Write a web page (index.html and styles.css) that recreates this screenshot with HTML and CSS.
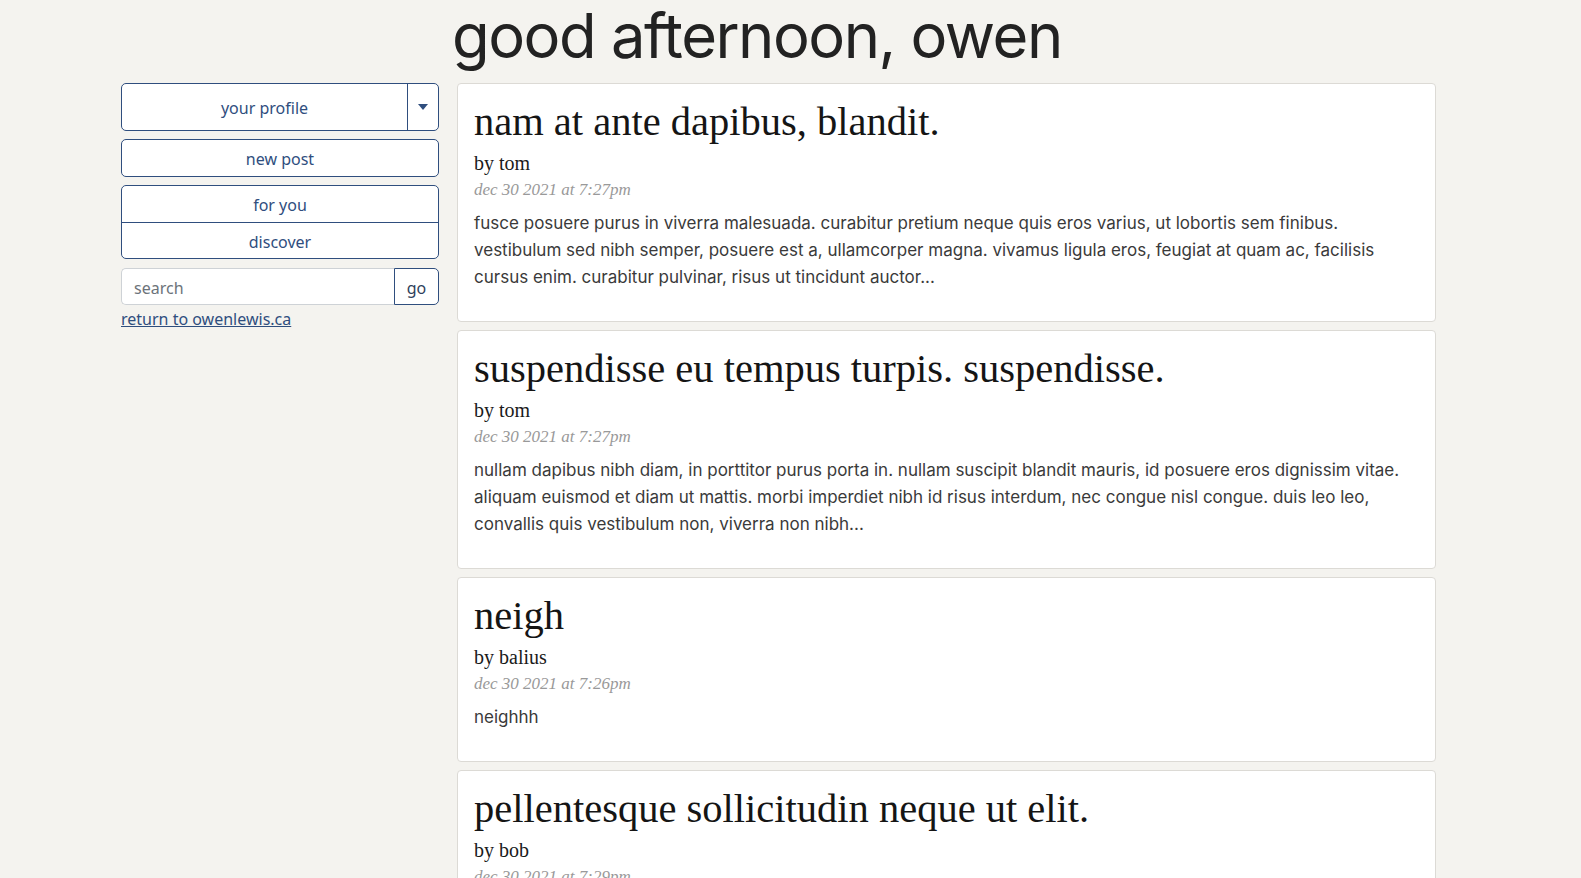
FILE: index.html
```html
<!DOCTYPE html>
<html lang="en">
<head>
<meta charset="utf-8">
<title>home</title>
<link rel="stylesheet" href="styles.css">
</head>
<body>
<div class="page">
  <h1 class="greeting">good afternoon, owen</h1>
  <aside class="sidebar">
    <div class="btn-split">
      <a class="btn-main" href="#">your profile</a>
      <a class="btn-caret" href="#" aria-label="more"><span class="caret"></span></a>
    </div>
    <a class="btn btn-single" href="#">new post</a>
    <div class="btn-group">
      <a class="btn-row" href="#">for you</a>
      <a class="btn-row" href="#">discover</a>
    </div>
    <form class="search">
      <input class="search-input" type="text" placeholder="search">
      <button class="search-go" type="button">go</button>
    </form>
    <a class="return-link" href="#">return to owenlewis.ca</a>
  </aside>
  <main class="feed">
    <article class="card">
      <h2 class="card-title">nam at ante dapibus, blandit.</h2>
      <div class="card-author">by tom</div>
      <div class="card-date">dec 30 2021 at 7:27pm</div>
      <p class="card-body">fusce posuere purus in viverra malesuada. curabitur pretium neque quis eros varius, ut lobortis sem finibus. vestibulum sed nibh semper, posuere est a, ullamcorper magna. vivamus ligula eros, feugiat at quam ac, facilisis cursus enim. curabitur pulvinar, risus ut tincidunt auctor...</p>
    </article>
    <article class="card">
      <h2 class="card-title">suspendisse eu tempus turpis. suspendisse.</h2>
      <div class="card-author">by tom</div>
      <div class="card-date">dec 30 2021 at 7:27pm</div>
      <p class="card-body">nullam dapibus nibh diam, in porttitor purus porta in. nullam suscipit blandit mauris, id posuere eros dignissim vitae. aliquam euismod et diam ut mattis. morbi imperdiet nibh id risus interdum, nec congue nisl congue. duis leo leo, convallis quis vestibulum non, viverra non nibh...</p>
    </article>
    <article class="card">
      <h2 class="card-title">neigh</h2>
      <div class="card-author">by balius</div>
      <div class="card-date">dec 30 2021 at 7:26pm</div>
      <p class="card-body">neighhh</p>
    </article>
    <article class="card">
      <h2 class="card-title">pellentesque sollicitudin neque ut elit.</h2>
      <div class="card-author">by bob</div>
      <div class="card-date">dec 30 2021 at 7:29pm</div>
      <p class="card-body">aenean vel lacus at tortor ultricies tincidunt. integer sed sapien non libero rhoncus dignissim. sed faucibus, nunc ut porta fermentum, arcu lorem dapibus enim, vitae volutpat sem nulla in nisl...</p>
    </article>
  </main>
</div>
</body>
</html>
```

FILE: styles.css
```css
* { box-sizing: border-box; }

html, body {
  margin: 0;
  padding: 0;
  background: #f4f3ef;
}

body {
  font-family: "Noto Sans", "Open Sans", sans-serif;
  color: #222;
}

.page {
  display: grid;
  grid-template-columns: 318px 979px;
  grid-template-rows: auto auto;
  column-gap: 18px;
  padding-left: 121px;
  align-items: start;
}

.greeting {
  grid-column: 2;
  grid-row: 1;
  margin: 0 0 0 -5px;
  padding: 0 0 12px;
  font-family: "Inter", sans-serif;
  font-weight: 400;
  font-size: 61.5px;
  line-height: 71px;
  letter-spacing: -1.5px;
  color: #222;
}

.sidebar {
  grid-column: 1;
  grid-row: 2;
  display: flex;
  flex-direction: column;
}

.btn-split {
  display: flex;
  height: 48px;
  border: 1px solid #2f4e7e;
  border-radius: 5px;
  background: #fff;
}

.btn-main,
.btn-caret,
.btn-single,
.btn-row {
  display: flex;
  align-items: center;
  justify-content: center;
  color: #2f4e7e;
  text-decoration: none;
  font-size: 16px;
}

.btn-main {
  flex: 1;
  padding-top: 1px;
}

.btn-caret {
  width: 31px;
  border-left: 1px solid #2f4e7e;
}

.caret {
  width: 0;
  height: 0;
  border-left: 5px solid transparent;
  border-right: 5px solid transparent;
  border-top: 6px solid #2f4e7e;
}

.btn-single {
  margin-top: 8px;
  height: 38px;
  border: 1px solid #2f4e7e;
  border-radius: 5px;
  background: #fff;
  padding-top: 1px;
}

.btn-group {
  margin-top: 8px;
  display: flex;
  flex-direction: column;
  border: 1px solid #2f4e7e;
  border-radius: 5px;
  background: #fff;
}

.btn-row {
  height: 36px;
  padding-top: 2px;
}

.btn-row + .btn-row {
  border-top: 1px solid #2f4e7e;
}

.search {
  margin: 9px 0 0;
  display: flex;
  height: 37px;
}

.search-input {
  flex: 1;
  min-width: 0;
  border: 1px solid #ced2d6;
  border-right: none;
  border-radius: 5px 0 0 5px;
  background: #fff;
  padding: 2px 12px 0;
  font-family: "Noto Sans", sans-serif;
  font-size: 16px;
  color: #333;
  outline: none;
}

.search-input::placeholder {
  color: #6c737a;
}

.search-go {
  width: 45px;
  border: 1px solid #2f4e7e;
  border-radius: 0 5px 5px 0;
  background: #fff;
  color: #2f3f5c;
  font-family: "Noto Sans", sans-serif;
  font-size: 16px;
  padding: 2px 0 0;
}

.return-link {
  margin-top: 2px;
  font-size: 16px;
  line-height: 24px;
  color: #2f4e7e;
  text-decoration: underline;
  align-self: flex-start;
}

.feed {
  grid-column: 2;
  grid-row: 2;
  display: flex;
  flex-direction: column;
  gap: 8px;
}

.card {
  background: #fff;
  border: 1px solid #dcdad5;
  border-radius: 4px;
  padding: 16px;
}

.card-title {
  margin: 0 0 4px;
  font-family: "Liberation Serif", serif;
  font-weight: 400;
  font-size: 40.5px;
  line-height: 44px;
  color: #151515;
}

.card-author {
  font-family: "Liberation Serif", serif;
  font-size: 20px;
  line-height: 30px;
  color: #1a1a1a;
}

.card-date {
  font-family: "Liberation Serif", serif;
  font-style: italic;
  font-size: 17px;
  line-height: 24px;
  color: #999;
}

.card-body {
  margin: 8px 0 14px;
  font-family: "Inter", sans-serif;
  font-size: 17px;
  line-height: 27px;
  color: #3a3a3a;
}
```
